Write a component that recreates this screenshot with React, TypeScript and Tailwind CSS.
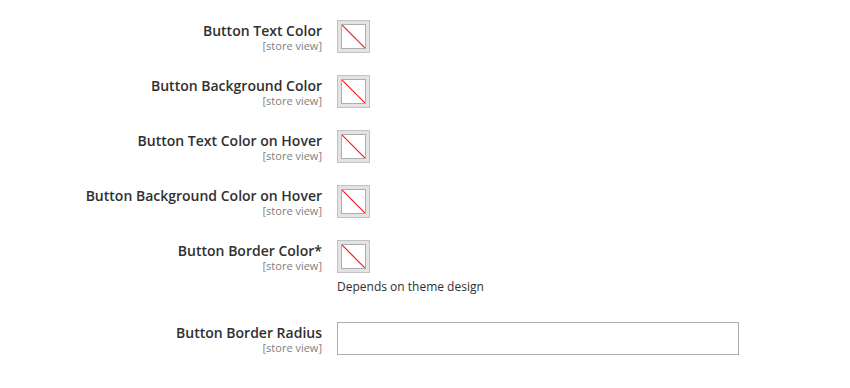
import * as React from "react";

const swatchRows = [
  { label: "Button Text Color" },
  { label: "Button Background Color" },
  { label: "Button Text Color on Hover" },
  { label: "Button Background Color on Hover" },
  { label: "Button Border Color*", note: "Depends on theme design" },
];

function FieldLabel({ label }: { label: string }) {
  return (
    <div className="flex w-[322px] shrink-0 flex-col items-end pt-[2px] text-right">
      <span className="text-[14px] font-semibold leading-[18px] text-[#303030]">{label}</span>
      <span className="mt-0 text-[11px] leading-[12px] text-[#808080]">[store view]</span>
    </div>
  );
}

function EmptySwatch() {
  return (
    <div className="h-[33px] w-[33px] border border-[#c2c2c2] bg-[#e3e3e3] p-[3px]">
      <div className="relative h-[25px] w-[25px] border border-[#adadad] bg-white">
        <svg className="absolute inset-0" width="23" height="23" viewBox="0 0 23 23">
          <line x1="0" y1="0" x2="23" y2="23" stroke="#ff1a1a" strokeWidth="1.2" />
        </svg>
      </div>
    </div>
  );
}

export default function App() {
  return (
    <div
      className="min-h-[388px] w-[850px] bg-white pt-[20px]"
      style={{ fontFamily: '"Open Sans", "Liberation Sans", sans-serif' }}
    >
      <div className="flex flex-col gap-[22px]">
        {swatchRows.map((row) => (
          <div key={row.label} className="flex items-start gap-[15px]">
            <FieldLabel label={row.label} />
            <div className="flex flex-col">
              <EmptySwatch />
              {row.note && (
                <span className="mt-[6px] text-[12px] leading-[16px] text-[#303030]">{row.note}</span>
              )}
            </div>
          </div>
        ))}
        <div className="mt-[5px] flex items-start gap-[15px]">
          <FieldLabel label="Button Border Radius" />
          <input
            type="text"
            className="h-[33px] w-[402px] border border-[#adadad] bg-white px-[10px] text-[14px] outline-none"
          />
        </div>
      </div>
    </div>
  );
}
